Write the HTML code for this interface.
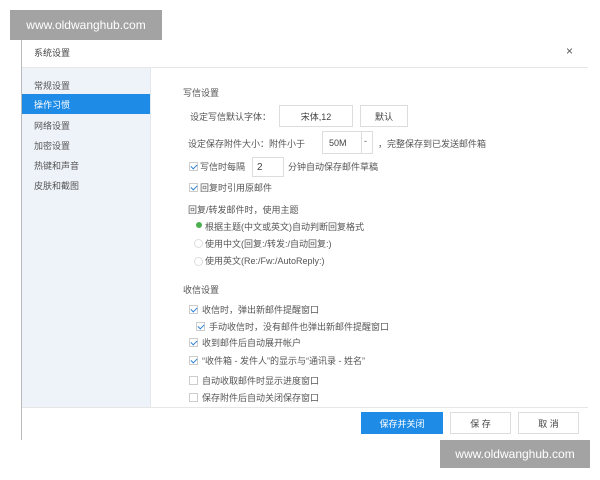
<!DOCTYPE html>
<html><head><meta charset="utf-8"><style>
*{margin:0;padding:0;box-sizing:border-box}
body{width:600px;height:480px;background:#fff;position:relative;overflow:hidden;font-family:"Liberation Sans","Noto Sans CJK SC",sans-serif;font-size:9px;color:#555}
.a{position:absolute;white-space:nowrap}
.wm{position:absolute;background:#a3a3a3;color:#fff;font-size:12px;display:flex;align-items:center;justify-content:center}
.cb{position:absolute;width:9px;height:9px;border:1px solid #ccc;background:#fff}
.cb.on::after{content:"";position:absolute;left:2px;top:0px;width:3px;height:5px;border:solid #2a7fd4;border-width:0 1.3px 1.3px 0;transform:rotate(45deg)}
.rd{position:absolute;width:9px;height:9px;border:1px solid #ddd;border-radius:50%}
.btn{position:absolute;border:1px solid #ddd;background:#fff;display:flex;align-items:center;justify-content:center;font-size:9px;color:#444}
</style></head><body>
<div class="wm" style="left:10px;top:10px;width:152px;height:30px">www.oldwanghub.com</div>
<div style="position:absolute;left:21px;top:40px;width:1px;height:400px;background:#bbb"></div>
<div class="a" style="left:34px;top:46px;color:#444">系统设置</div>
<div class="a" style="left:566px;top:44px;font-size:12px;color:#555">×</div>
<div style="position:absolute;left:22px;top:67px;width:566px;height:1px;background:#e6e6e6"></div>
<div style="position:absolute;left:22px;top:68px;width:129px;height:339px;background:#eef3fa;border-right:1px solid #e3e8ef"></div>
<div style="position:absolute;left:22px;top:94px;width:128px;height:20px;background:#1e8ce6"></div>
<div class="a" style="left:34px;top:79px">常规设置</div>
<div class="a" style="left:34px;top:98px;color:#fff">操作习惯</div>
<div class="a" style="left:34px;top:119px">网络设置</div>
<div class="a" style="left:34px;top:139px">加密设置</div>
<div class="a" style="left:34px;top:159px">热键和声音</div>
<div class="a" style="left:34px;top:179px">皮肤和截图</div>
<div class="a" style="left:183px;top:86px">写信设置</div>
<div class="a" style="left:190px;top:110px">设定写信默认字体：</div>
<div class="btn" style="left:279px;top:105px;width:74px;height:22px">宋体,12</div>
<div class="btn" style="left:360px;top:105px;width:48px;height:22px">默认</div>
<div class="a" style="left:188px;top:137px">设定保存附件大小：附件小于</div>
<div class="btn" style="left:322px;top:131px;width:51px;height:23px;justify-content:flex-start;padding-left:6px">50M</div>
<div style="position:absolute;left:361px;top:131px;width:1px;height:23px;background:#ddd"></div>
<div class="a" style="left:364px;top:136px">-</div>
<div class="a" style="left:378px;top:137px">，完整保存到已发送邮件箱</div>
<div class="cb on" style="left:189px;top:162px"></div>
<div class="a" style="left:200px;top:160px">写信时每隔</div>
<div class="btn" style="left:252px;top:157px;width:32px;height:20px;justify-content:flex-start;padding-left:4px;font-size:10px">2</div>
<div class="a" style="left:288px;top:160px">分钟自动保存邮件草稿</div>
<div class="cb on" style="left:189px;top:183px"></div>
<div class="a" style="left:200px;top:181px">回复时引用原邮件</div>
<div class="a" style="left:188px;top:203px">回复/转发邮件时，使用主题</div>
<div style="position:absolute;left:196px;top:222px;width:6px;height:6px;border-radius:50%;background:#4caf50"></div>
<div class="a" style="left:205px;top:220px">根据主题(中文或英文)自动判断回复格式</div>
<div class="rd" style="left:194px;top:239px"></div>
<div class="a" style="left:205px;top:237px">使用中文(回复:/转发:/自动回复:)</div>
<div class="rd" style="left:194px;top:257px"></div>
<div class="a" style="left:205px;top:254px">使用英文(Re:/Fw:/AutoReply:)</div>
<div class="a" style="left:183px;top:283px">收信设置</div>
<div class="cb on" style="left:189px;top:305px"></div><div class="a" style="left:202px;top:303px">收信时，弹出新邮件提醒窗口</div>
<div class="cb on" style="left:196px;top:322px"></div><div class="a" style="left:209px;top:320px">手动收信时，没有邮件也弹出新邮件提醒窗口</div>
<div class="cb on" style="left:189px;top:338px"></div><div class="a" style="left:202px;top:336px">收到邮件后自动展开帐户</div>
<div class="cb on" style="left:189px;top:356px"></div><div class="a" style="left:202px;top:354px">“收件箱 - 发件人”的显示与“通讯录 - 姓名”</div>
<div class="cb" style="left:189px;top:376px"></div><div class="a" style="left:202px;top:374px">自动收取邮件时显示进度窗口</div>
<div class="cb" style="left:189px;top:393px"></div><div class="a" style="left:202px;top:391px">保存附件后自动关闭保存窗口</div>
<div style="position:absolute;left:22px;top:407px;width:566px;height:1px;background:#e6e6e6"></div>
<div class="btn" style="left:361px;top:412px;width:82px;height:22px;background:#1e8ce6;border-color:#1e8ce6;color:#fff">保存并关闭</div>
<div class="btn" style="left:450px;top:412px;width:61px;height:22px">保 存</div>
<div class="btn" style="left:518px;top:412px;width:61px;height:22px">取 消</div>
<div class="wm" style="left:440px;top:440px;width:150px;height:28px">www.oldwanghub.com</div>
</body></html>
